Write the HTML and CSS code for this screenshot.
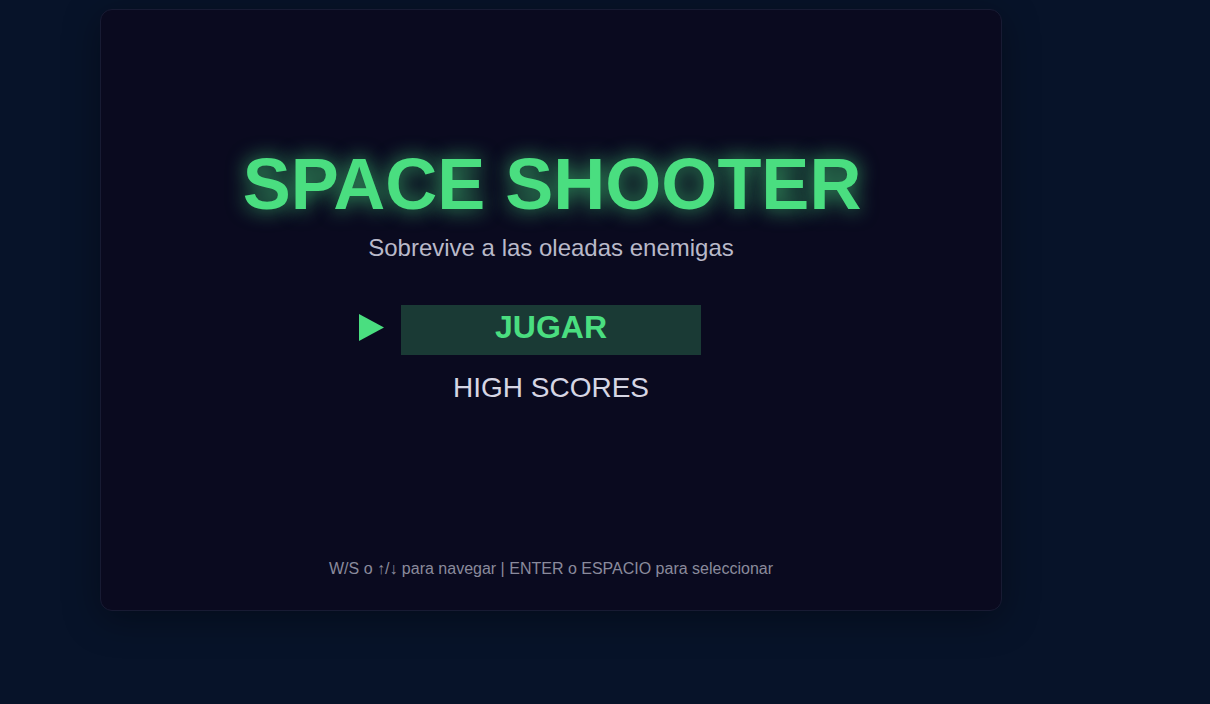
FILE: index.html
```html
<!DOCTYPE html>
<html lang="es">
<head>
<meta charset="utf-8">
<title>Space Shooter</title>
<link rel="stylesheet" href="styles.css">
</head>
<body>
<main class="stage">
  <section class="screen">
    <h1 class="title">SPACE SHOOTER</h1>
    <p class="subtitle">Sobrevive a las oleadas enemigas</p>
    <nav class="menu">
      <div class="menu-row">
        <svg class="pointer" width="25" height="27" viewBox="0 0 25 27"><polygon points="0,0 25,13.5 0,27" fill="#4ade80"/></svg>
        <div class="item selected">JUGAR</div>
        <span></span>
      </div>
      <div class="menu-row">
        <span></span>
        <div class="item">HIGH SCORES</div>
        <span></span>
      </div>
    </nav>
    <p class="hint">W/S o ↑/↓ para navegar | ENTER o ESPACIO para seleccionar</p>
  </section>
</main>
</body>
</html>
```
FILE: styles.css
```css
* { box-sizing: border-box; }
html, body {
  margin: 0;
  height: 100%;
}
body {
  background: #071329;
  font-family: "Liberation Sans", Arial, sans-serif;
  overflow: hidden;
}
.stage {
  padding: 9px 0 0 100px;
}
.screen {
  width: 902px;
  height: 602px;
  background: #0a0a1f;
  border: 1px solid #181b33;
  border-radius: 12px;
  box-shadow: 0 8px 36px rgba(0, 0, 0, 0.35);
  display: flex;
  flex-direction: column;
  align-items: center;
  padding-top: 134px;
  padding-bottom: 31px;
}
.title {
  margin: 0;
  font-size: 72px;
  line-height: 80px;
  font-weight: 700;
  color: #4ade80;
  text-shadow: 0 0 20px rgba(74, 222, 128, 0.75);
  transform: translateX(1px);
}
.subtitle {
  margin: 9px 0 0;
  font-size: 24px;
  line-height: 30px;
  color: #b9b9c9;
}
.menu {
  margin-top: 42px;
  display: flex;
  flex-direction: column;
  gap: 8px;
}
.menu-row {
  display: grid;
  grid-template-columns: 25px 300px 25px;
  column-gap: 17px;
  align-items: start;
}
.pointer {
  display: block;
  margin-top: 9px;
}
.item {
  height: 50px;
  line-height: 50px;
  text-align: center;
  font-size: 28px;
  color: #d6d6e4;
}
.item.selected {
  background: #1a3a35;
  color: #4ade80;
  font-size: 32px;
  font-weight: 700;
  line-height: 45px;
}
.hint {
  margin: auto 0 0;
  font-size: 16px;
  line-height: 20px;
  color: #8a8a9c;
}
```
